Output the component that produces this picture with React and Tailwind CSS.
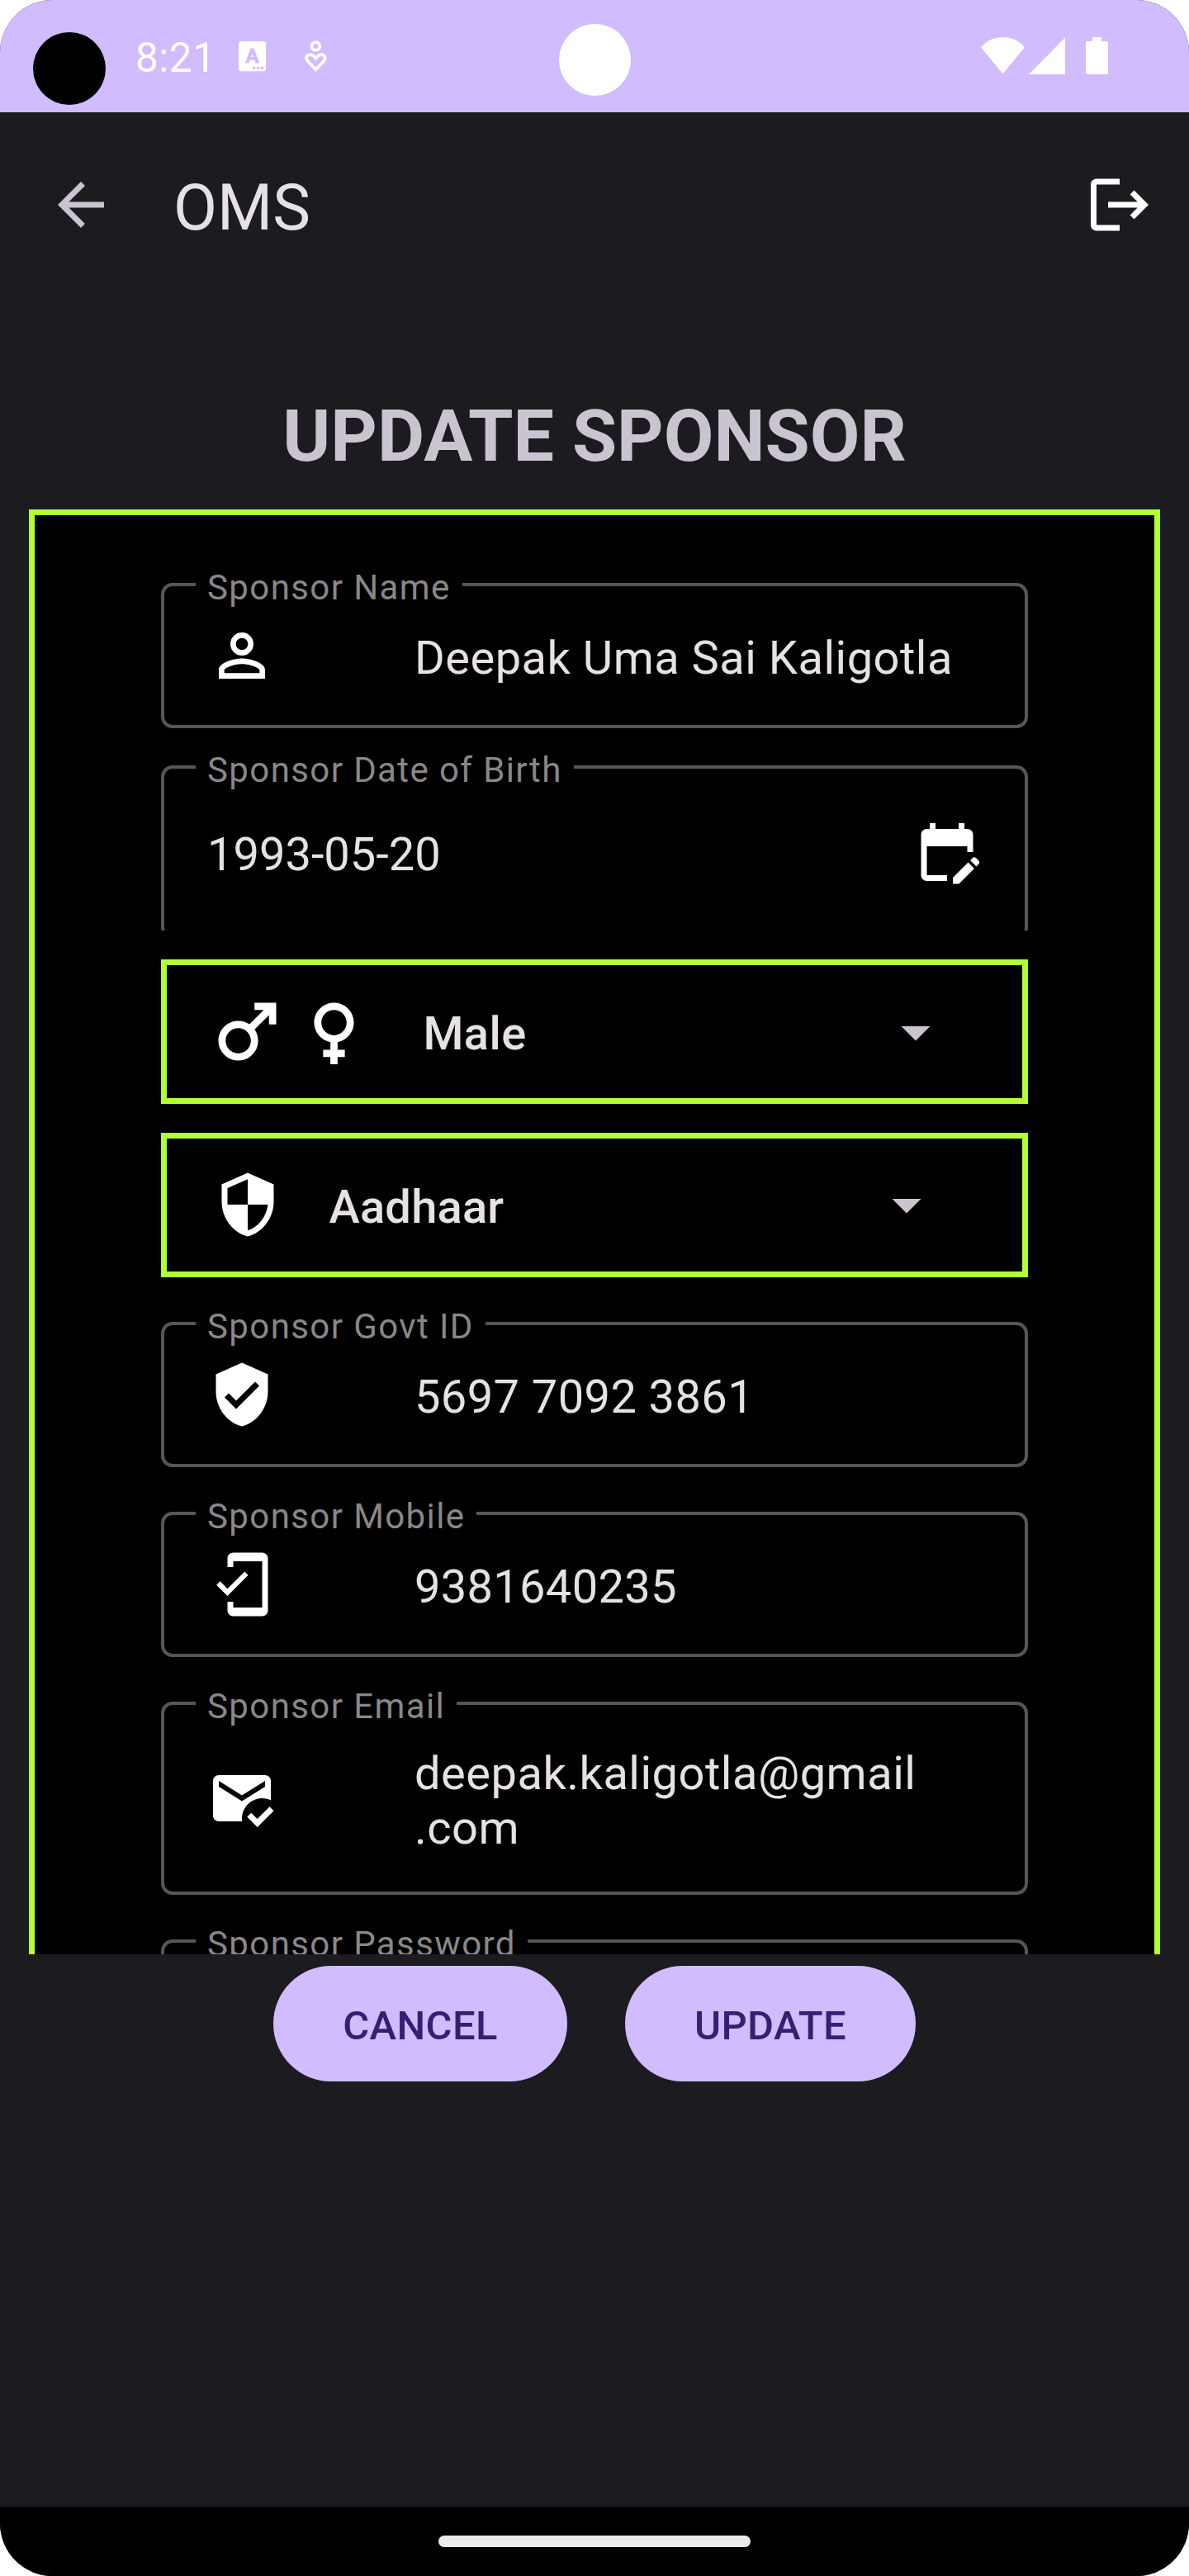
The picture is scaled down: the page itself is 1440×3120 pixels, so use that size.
import {
  MdArrowBack,
  MdArrowDropDown,
  MdEditCalendar,
  MdFemale,
  MdLogout,
  MdMale,
  MdMarkEmailRead,
  MdMobileFriendly,
  MdPersonOutline,
  MdSecurity,
  MdVerifiedUser,
} from 'react-icons/md';

function StatusBar() {
  return (
    <div className="relative flex h-[136px] items-start bg-[#D0BCFF] pl-10 pr-[98px]">
      <div className="mt-[39px] size-[88px] rounded-full bg-black" />
      <span className="ml-9 mt-[41px] w-[98px] text-[49.5px] leading-[58px] tracking-[0.5px] text-white">8:21</span>
      <svg className="ml-[27px] mt-[50px] h-[37px] w-[33px]" viewBox="0 0 33 37">
        <rect width="33" height="36.3" rx="3" fill="#fff" />
        <text x="16.5" y="26" textAnchor="middle" fontFamily="Roboto" fontWeight="500" fontSize="24" fill="#D0BCFF" stroke="#D0BCFF" strokeWidth="1.2" strokeLinejoin="round">A</text>
        <circle cx="18.7" cy="32.3" r="1.7" fill="#D0BCFF" />
        <circle cx="23.7" cy="32.3" r="1.7" fill="#D0BCFF" />
        <circle cx="28.5" cy="32.3" r="1.7" fill="#D0BCFF" />
      </svg>
      <svg className="ml-[47px] mt-[49px] h-[39px] w-[27px]" viewBox="0 0 27 39" fill="none" stroke="#fff" strokeWidth="3.8">
        <circle cx="13.4" cy="7" r="4.9" />
        <path d="M13.4 35.2 4 25.4C1 22 1.8 17.4 6.6 17.2c2.6 0 4.6 1.5 6.8 4.4 2.2-2.9 4.2-4.4 6.8-4.4 4.8.2 5.6 4.8 2.6 8.2Z" />
      </svg>
      <div className="ml-auto mt-[45px] flex h-[45px]">
        <svg className="h-[45px] w-[53px]" viewBox="0 0 53 45" fill="#fff">
          <path d="M0 12.3C13-4.1 40-4.1 53 12.3L26.5 44.5Z" />
        </svg>
        <svg className="ml-[5px] h-[45px] w-[44px]" viewBox="0 0 44 45" fill="#fff">
          <path d="M44 .5V45H0Z" />
        </svg>
        <svg className="ml-[25px] h-[45px] w-[27px]" viewBox="0 0 27 45" fill="#fff">
          <path d="M8 0H19V5H25.500Q27 5 27 6.500V43.500Q27 45 25.500 45H1.500Q0 45 0 43.500V6.500Q0 5 1.500 5H8Z" />
        </svg>
      </div>
      <div className="absolute left-[677px] top-[29px] size-[87px] rounded-full bg-white" />
    </div>
  );
}

function Field({ label, heightClass = 'h-[176px]', children }) {
  return (
    <div className={`relative flex w-full shrink-0 items-center rounded-[14px] border-4 border-[#575657] pl-[52px] ${heightClass}`}>
      <span className="absolute -top-[23px] left-[38px] whitespace-nowrap bg-black px-[14px] text-[42px] leading-[49px] tracking-[1.4px] text-[#8A8789]">
        {label}
      </span>
      {children}
    </div>
  );
}

function IconField({ label, icon: Icon, heightClass, children }) {
  return (
    <Field label={label} heightClass={heightClass}>
      <Icon className="size-[84px] shrink-0 text-white" />
      <span className="ml-[167px] whitespace-nowrap pt-[6px] text-[56px] leading-[66px]">{children}</span>
    </Field>
  );
}

export default function App() {
  return (
    <div className="h-[3120px] w-[1440px] bg-white">
      <div className="flex h-full flex-col overflow-hidden rounded-[64px] bg-[#1C1B1F] font-['Roboto',sans-serif] text-[#E6E1E5]">
        <StatusBar />
        <header className="flex h-[224px] items-center pl-14 pr-[42px]">
          <MdArrowBack className="size-[84px] text-[#CAC4D0]" />
          <span className="ml-[70px] pt-[7px] text-[77px] leading-[90px]">OMS</span>
          <MdLogout className="ml-auto size-[84px] text-white" />
        </header>
        <main className="flex flex-1 flex-col items-center">
          <h1 className="mt-[116px] text-[88px] font-bold leading-[103px] text-[#CAC4D0]">UPDATE SPONSOR</h1>
          <section className="mt-[38px] flex h-[1750px] w-[1370px] flex-col overflow-hidden border-x-[7px] border-t-[7px] border-[#B2FF34] bg-black px-[153px] pt-[82px]">
            <IconField label="Sponsor Name" icon={MdPersonOutline}>
              <span className="tracking-[0.5px]">Deepak Uma Sai Kaligotla</span>
            </IconField>
            <div className="mt-[25px] h-[220px] shrink-0 overflow-hidden pt-5">
              <Field label="Sponsor Date of Birth" heightClass="h-[210px]">
                <span className="pt-[6px] text-[56px] leading-[66px]">1993-05-20</span>
                <MdEditCalendar className="ml-auto mr-[52.5px] size-[84px] text-white" />
              </Field>
            </div>
            <div className="mt-[35px] flex h-[175px] shrink-0 items-center border-[7px] border-[#B2FF34] pl-[44.5px] pr-[87.5px]">
              <MdMale className="size-[105px] text-white" />
              <MdFemale className="size-[105px] text-white" />
              <span className="ml-[56px] pt-[5px] text-[56px] font-medium leading-[66px] tracking-[0.4px]">Male</span>
              <MdArrowDropDown className="ml-auto size-[84px] text-[#CAC4D0]" />
            </div>
            <div className="mt-[35px] flex h-[175px] shrink-0 items-center border-[7px] border-[#B2FF34] pb-[2px] pl-14 pr-[98px]">
              <MdSecurity className="size-[84px] text-white" />
              <span className="ml-[56.5px] pt-[6px] text-[56px] font-medium leading-[66px] tracking-[0.25px]">Aadhaar</span>
              <MdArrowDropDown className="ml-auto size-[84px] text-[#CAC4D0]" />
            </div>
            <div className="mt-[54px] flex flex-col gap-[54px]">
              <IconField label="Sponsor Govt ID" icon={MdVerifiedUser}>
                <span className="tracking-[0.4px]">5697 7092 3861</span>
              </IconField>
              <IconField label="Sponsor Mobile" icon={MdMobileFriendly}>
                <span className="tracking-[0.3px]">9381640235</span>
              </IconField>
              <IconField label="Sponsor Email" icon={MdMarkEmailRead} heightClass="h-[234px]">
                <span className="tracking-[0.5px]">deepak.kaligotla@gmail<br />.com</span>
              </IconField>
              <Field label="Sponsor Password" />
            </div>
          </section>
          <div className="mt-[14px] flex gap-[70px] text-[49px] font-medium leading-[58px] tracking-[0.35px] text-[#381E72]">
            <button className="h-[140px] w-[356px] rounded-full bg-[#D0BCFF] pt-[5px]">CANCEL</button>
            <button className="h-[140px] w-[352px] rounded-full bg-[#D0BCFF] pt-[5px]">UPDATE</button>
          </div>
        </main>
        <footer className="flex h-[84px] justify-center bg-black pt-[35px]">
          <div className="h-[14px] w-[378px] rounded-full bg-[#EBEBEB]" />
        </footer>
      </div>
    </div>
  );
}
